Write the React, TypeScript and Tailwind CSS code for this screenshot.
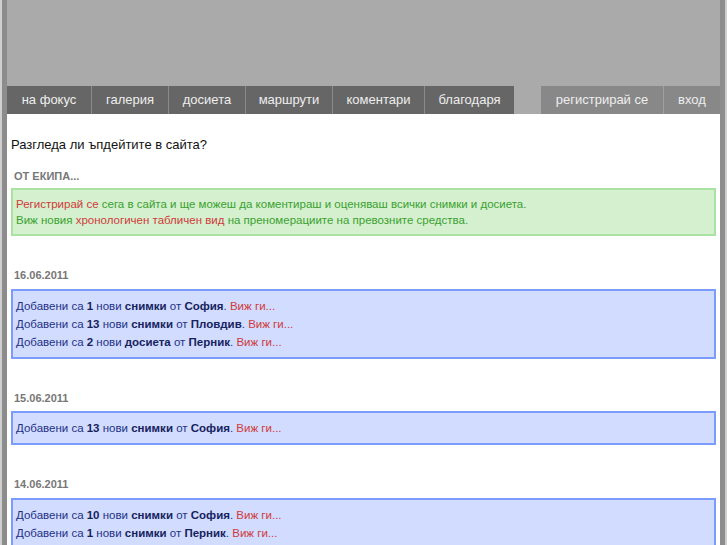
import React from 'react';

const font = { fontFamily: '"Liberation Sans", Arial, Helvetica, sans-serif' };

type Entry = { count: string; kind: string; city: string };

const days: { date: string; items: Entry[] }[] = [
  {
    date: '16.06.2011',
    items: [
      { count: '1', kind: 'снимки', city: 'София' },
      { count: '13', kind: 'снимки', city: 'Пловдив' },
      { count: '2', kind: 'досиета', city: 'Перник' },
    ],
  },
  {
    date: '15.06.2011',
    items: [{ count: '13', kind: 'снимки', city: 'София' }],
  },
  {
    date: '14.06.2011',
    items: [
      { count: '10', kind: 'снимки', city: 'София' },
      { count: '1', kind: 'снимки', city: 'Перник' },
    ],
  },
];

const leftNav = [
  { label: 'на фокус', w: 'w-[84px]' },
  { label: 'галерия', w: 'w-[77px]' },
  { label: 'досиета', w: 'w-[77px]' },
  { label: 'маршрути', w: 'w-[87px]' },
  { label: 'коментари', w: 'w-[92px]' },
  { label: 'благодаря', w: 'w-[90px]' },
];
const rightNav = [
  { label: 'регистрирай се', w: 'w-[122px]' },
  { label: 'вход', w: 'w-[57px]' },
];

function App() {
  return (
    <div className="min-h-screen w-full bg-[#cfcfcf] px-[2px]" style={font}>
      <div className="min-h-screen border-x-[5px] border-[#8c8c8c] bg-white">
        <div className="h-[86px] bg-[#aaaaaa]" />
        <nav className="flex h-[28px] bg-[#aaaaaa] text-[13px] text-[#eeeeee]">
          {leftNav.map((n, i) => (
            <a
              key={n.label}
              className={`flex shrink-0 items-center justify-center whitespace-nowrap bg-[#666666] ${n.w} ${
                i > 0 ? 'border-l border-[#8a8a8a]' : ''
              }`}
            >
              {n.label}
            </a>
          ))}
          <div className="flex-1" />
          {rightNav.map((n, i) => (
            <a
              key={n.label}
              className={`flex shrink-0 items-center justify-center whitespace-nowrap bg-[#888888] ${n.w} ${
                i > 0 ? 'border-l border-[#a0a0a0]' : ''
              }`}
            >
              {n.label}
            </a>
          ))}
        </nav>

        <div className="px-[4px] pt-[21px] text-[11.5px]">
          <p className="text-[13px] text-[#111]">Разгледа ли ъпдейтите в сайта?</p>

          <h3 className="mt-[13px] pl-[3px] text-[11px] font-bold uppercase text-[#777]">от екипа...</h3>
          <div className="mt-[4px] border-2 border-[#a9e2a3] bg-[#d4f0cf] px-[3px] py-[6px] leading-[16px] text-[#3aa12e]">
            <div>
              <span className="text-[#d03a3a]">Регистрирай се</span> сега в сайта и ще можеш да коментираш и оценяваш
              всички снимки и досиета.
            </div>
            <div>
              Виж новия <span className="text-[#d03a3a]">хронологичен табличен вид</span> на преномерациите на превозните
              средства.
            </div>
          </div>

          {days.map((d) => (
            <div key={d.date} className="mt-[31px]">
              <h3 className="pl-[3px] text-[11px] font-bold text-[#777]">{d.date}</h3>
              <div className="mt-[5px] border-2 border-[#7b9bff] bg-[#d1dcff] px-[3px] py-[6px] leading-[18px] text-[#1f3185]">
                {d.items.map((e, i) => (
                  <div key={i}>
                    Добавени са <b className="text-[#16235e]">{e.count}</b> нови{' '}
                    <b className="text-[#16235e]">{e.kind}</b> от <b className="text-[#16235e]">{e.city}</b>.{' '}
                    <a className="text-[#d03a3a]">Виж ги...</a>
                  </div>
                ))}
              </div>
            </div>
          ))}
        </div>
      </div>
    </div>
  );
}

export default App;
